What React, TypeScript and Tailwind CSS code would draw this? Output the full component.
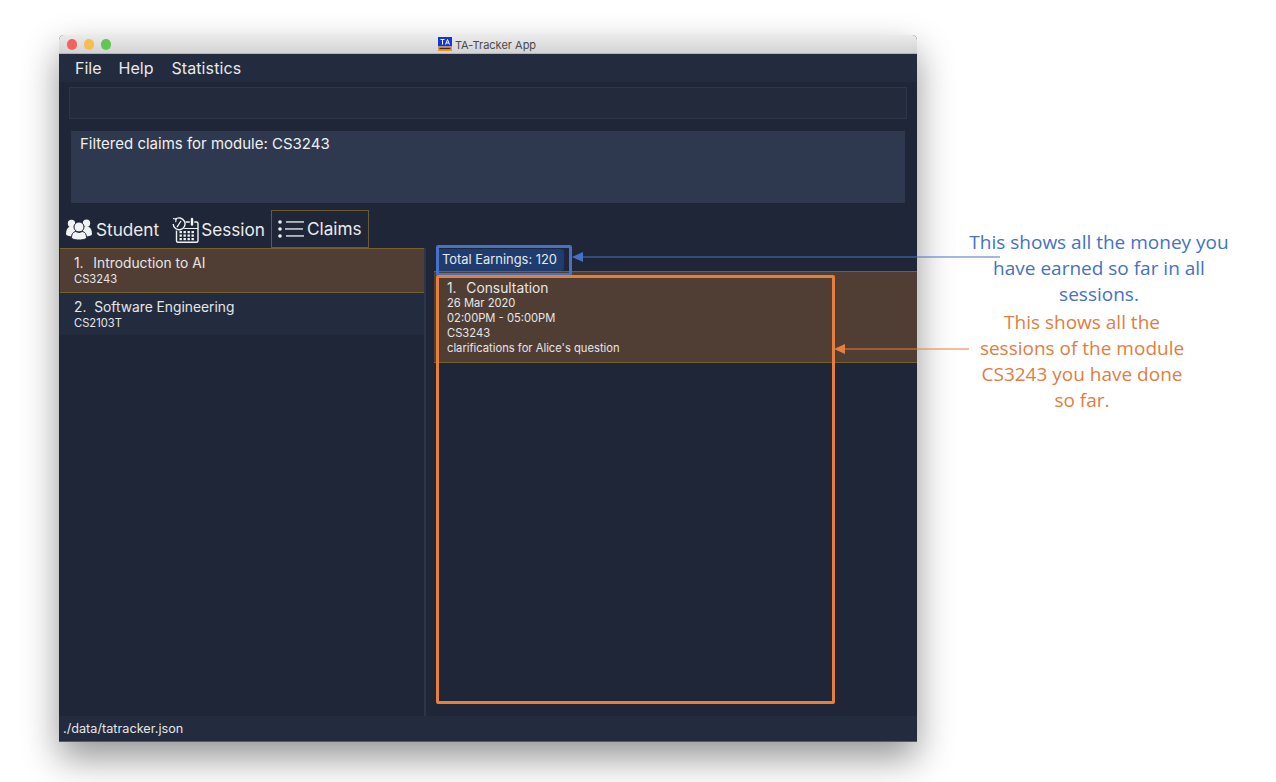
const appFont = { fontFamily: "Inter, 'Liberation Sans', sans-serif" };

const StudentIcon = () => (
  <svg width="26" height="21" viewBox="0 0 26 21" fill="#f1f2f4" className="shrink-0">
    <circle cx="5.500" cy="4.500" r="3.700" />
    <circle cx="20.500" cy="4.300" r="3.700" />
    <path d="M0 15c0-4 1.500-6.500 4-7.200h3.500L10 10 7 17.500C3 17.500 0 16.500 0 15z" />
    <path d="M26 15c0-4-1.500-6.500-4-7.200h-3.500L16 10l3 7.500c4 0 7-1 7-2.500z" />
    <circle cx="13" cy="8" r="5" stroke="#1f2739" strokeWidth="1" />
    <path d="M5.500 18.500c0-3.500 1.500-5.500 4-6l3.500 1 3.500-1c2.500.5 4 2.500 4 6 0 1.500-3.200 2.500-7.500 2.500s-7.500-1-7.500-2.500z" stroke="#1f2739" strokeWidth="1" />
  </svg>
);

const SessionIcon = () => (
  <svg width="27" height="26" viewBox="0 0 27 26" fill="none" stroke="#f1f2f4" className="shrink-0">
    <rect x="4.500" y="5" width="21.500" height="20.300" rx="1.500" strokeWidth="1.400" />
    <path d="M4.500 11.500h21.500" strokeWidth="1" />
    <circle cx="7" cy="7" r="6.600" fill="#1f2739" stroke="#1f2739" strokeWidth="1" />
    <path d="M3.200 2.400A5.900 5.900 0 1 1 1.200 7" strokeWidth="1.400" />
    <path d="M1 1.500l3.200.6-.6 3" strokeWidth="1.100" />
    <path d="M9 4L7 7 5 10.200" strokeWidth="1.300" />
    <path d="M20 1.500v6" stroke="#1f2739" strokeWidth="4.500" />
    <path d="M20 2v5.500" strokeWidth="2.400" strokeLinecap="round" />
    <g fill="#f1f2f4" stroke="none">
      {[14, 17.500, 21].map((y) =>
        [7.500, 11.500, 15.500, 19.500].map((x) => <rect key={`${x}-${y}`} x={x} y={y} width="2.400" height="2.200" />),
      )}
    </g>
  </svg>
);

const ClaimsIcon = () => (
  <svg width="26" height="18" viewBox="0 0 26 18" fill="#f1f2f4" className="shrink-0">
    <circle cx="2" cy="2" r="1.800" />
    <circle cx="2" cy="9" r="1.800" />
    <circle cx="2" cy="16" r="1.800" />
    <rect x="8" y="1.300" width="18" height="1.300" />
    <rect x="7" y="8.300" width="18" height="1.300" />
    <rect x="8" y="15.300" width="18" height="1.300" />
  </svg>
);

const AppLogo = () => (
  <svg width="14" height="14" viewBox="0 0 14 14" className="shrink-0">
    <rect width="14" height="9.500" fill="#1237d8" />
    <rect y="9.500" width="14" height="4.500" fill="#e8952c" />
    <rect x="1.500" y="10.800" width="11" height="1.300" fill="#4a2a10" />
    <path d="M2.500 2.500h4M4.500 2.500v5M7.500 7.500l2-5 2 5M8.300 6h2.400" stroke="#fff" strokeWidth="1" fill="none" />
  </svg>
);

const App = () => {
  return (
    <div className="relative w-[1276px] h-[782px] overflow-hidden bg-white pt-[35px] pl-[59px]" style={appFont}>
      <div className="w-[858px] h-[707px] flex flex-col rounded-t-[5px] overflow-hidden shadow-[0_16px_36px_rgba(0,0,0,0.42)] bg-[#1f2637]">
        {/* title bar */}
        <div className="relative h-[19px] shrink-0 flex items-center justify-center gap-[3px] bg-gradient-to-b from-[#ebebeb] to-[#d3d3d3] border-b border-[#b4b4b4]">
          <div className="absolute left-[7.500px] top-[4px] flex gap-[6.700px]">
            <span className="size-[10.500px] rounded-full bg-[#f0645c]" />
            <span className="size-[10.500px] rounded-full bg-[#f6bd4f]" />
            <span className="size-[10.500px] rounded-full bg-[#62c655]" />
          </div>
          <div className="-ml-[2px] flex items-center gap-[3px]">
            <AppLogo />
            <span className="pt-[2px] text-[11px] text-[#4a4a4a]">TA-Tracker App</span>
          </div>
        </div>

        {/* menu */}
        <div className="h-[28px] shrink-0 flex items-center gap-[17px] pl-[16px] text-[16px] text-[#e8e8e8] bg-[#232b3e]">
          <span>File</span>
          <span>Help</span>
          <span className="ml-px tracking-[0.1px]">Statistics</span>
        </div>

        {/* command box */}
        <div className="shrink-0 mt-[5px] mx-[10px] h-[32px] bg-[#222a3c] border border-[#2d3648]" />

        {/* result box */}
        <div className="shrink-0 mt-[12px] ml-[12px] mr-[12px] h-[72px] bg-[#2e394f] pl-[9px] pt-[3px] text-[15px] leading-[20px] text-[#f0f0f0]">
          Filtered claims for module: CS3243
        </div>

        {/* tabs */}
        <div className="shrink-0 mt-[7px] h-[38px] flex items-center pl-[7px] text-[17.200px] text-[#ececec]">
          <div className="flex items-center gap-[4px] mr-[13px] mt-[2px]">
            <StudentIcon />
            <span>Student</span>
          </div>
          <div className="flex items-center gap-[2px] mr-[6px] mt-[2px]">
            <SessionIcon />
            <span>Session</span>
          </div>
          <div className="h-[38px] w-[98px] flex items-center gap-[3px] pl-[6px] border border-[#6b5a34]">
            <ClaimsIcon />
            <span>Claims</span>
          </div>
        </div>

        {/* panels */}
        <div className="flex-1 flex min-h-0 bg-[#1f2637]">
          <div className="w-[366px] ml-px shrink-0 border-r-2 border-[#2c3445]">
            <div className="h-[45px] pl-[14px] pt-[7px] bg-[#503e35] border-y border-[#75602f] text-[#e6e6e6]">
              <div className="text-[13.800px] leading-[15px]">
                1.&nbsp;&nbsp;<span className="ml-[2px]">Introduction to AI</span>
              </div>
              <div className="mt-px text-[11.200px] leading-[15px]">CS3243</div>
            </div>
            <div className="h-[42px] pl-[14px] pt-[7px] bg-[#232c3f] text-[#e6e6e6]">
              <div className="text-[13.800px] leading-[15px]">2.&nbsp;&nbsp;Software Engineering</div>
              <div className="mt-px text-[11.200px] leading-[15px]">CS2103T</div>
            </div>
          </div>

          <div className="flex-1 pl-[9px] -mt-px min-w-0">
            <div className="w-[128px] h-[22px] mt-[2px] ml-px pl-[6px] flex items-center rounded-[3px] bg-[#1e3c70] text-[12.900px] text-[#e8e8e8]">
              Total Earnings: 120
            </div>
            <div className="-ml-[1px] h-[92px] pl-[13px] pt-[8px] bg-[#503e35] border-y border-[#75602f] text-[#e6e6e6]">
              <div className="text-[13.800px] leading-[16px]">
                1.&nbsp;&nbsp;<span className="ml-[2px]">Consultation</span>
              </div>
              <div className="text-[11.200px] leading-[15px]">26 Mar 2020</div>
              <div className="text-[11.200px] leading-[15px]">02:00PM - 05:00PM</div>
              <div className="text-[11.200px] leading-[15px]">CS3243</div>
              <div className="text-[11.200px] leading-[14px]">clarifications for Alice's question</div>
            </div>
          </div>
        </div>

        {/* status bar */}
        <div className="h-[26px] shrink-0 flex items-center pl-[4px] pt-px text-[12.700px] text-[#e6e6e6] bg-[#232b3e] border-b border-[#555b66]">
          ./data/tatracker.json
        </div>
      </div>

      {/* annotation boxes */}
      <div className="absolute left-[436px] top-[245px] w-[136px] h-[31px] border-[3px] border-[#4472c4] rounded-[2px]" />
      <div className="absolute left-[436px] top-[275px] w-[399px] h-[429px] border-[3px] border-[#e67e3c] rounded-[2px]" />

      {/* blue arrow */}
      <svg className="absolute left-[570px] top-[250px]" width="435" height="14" viewBox="0 0 435 14">
        <path d="M2 7l11-5v10z" fill="#4472c4" />
        <path d="M10 7h420" stroke="#4472c4" strokeWidth="1.200" />
      </svg>
      {/* orange arrow */}
      <svg className="absolute left-[832px] top-[342px]" width="140" height="14" viewBox="0 0 140 14">
        <path d="M2 7l11-5v10z" fill="#e67e3c" />
        <path d="M10 7h127" stroke="#e67e3c" strokeWidth="1.200" />
      </svg>

      {/* annotation labels */}
      <div
        className="absolute left-[950px] top-[229px] w-[298px] text-center text-[19px] leading-[26px] text-[#4472c4]"
        style={{ fontFamily: "'Open Sans', sans-serif" }}
      >
        This shows all the money you
        <br />
        have earned so far in all
        <br />
        sessions.
      </div>
      <div
        className="absolute left-[960px] top-[309px] w-[244px] text-center text-[19px] leading-[26px] text-[#e27d3f]"
        style={{ fontFamily: "'Open Sans', sans-serif" }}
      >
        This shows all the
        <br />
        sessions of the module
        <br />
        CS3243 you have done
        <br />
        so far.
      </div>
    </div>
  );
};

export default App;
